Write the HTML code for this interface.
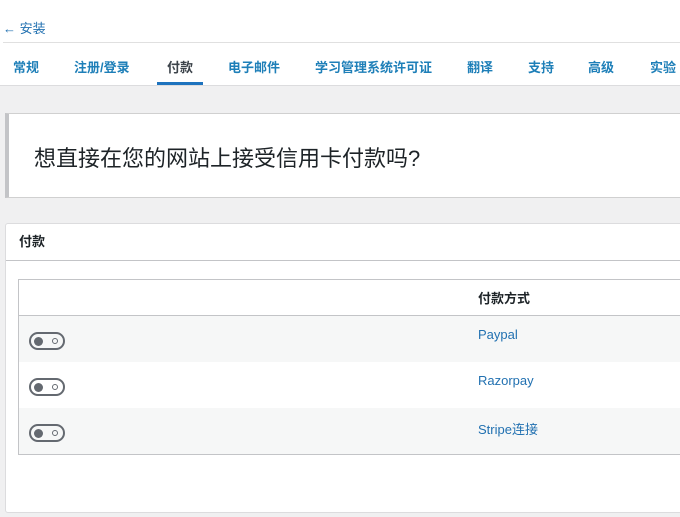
<!DOCTYPE html>
<html><head><meta charset="utf-8"><style>
*{margin:0;padding:0;box-sizing:border-box}
body{width:680px;height:517px;overflow:hidden;background:#f0f0f1;font-family:"Liberation Sans","Noto Sans CJK SC",sans-serif;position:relative}
.top{position:absolute;left:0;top:0;width:680px;height:86px;background:#fff;border-bottom:1px solid #dcdcde}
.back{position:absolute;left:3px;top:18px;font-size:13px;color:#2271b1}
.line{position:absolute;left:3px;top:42px;right:0;height:1px;background:#e0e0e0}
.tab{position:absolute;top:57px;font-size:13px;font-weight:bold;color:#1e7fb8}
.tab.act{color:#3c434a}
.ul{position:absolute;left:157px;top:82px;width:46px;height:3px;background:#1e73be}
.notice{position:absolute;left:5px;top:113px;width:700px;height:85px;background:#fff;border:1px solid #d0d0d0;border-left:4px solid #c3c4c7}
.notice div{position:absolute;left:25px;top:27px;font-size:22px;color:#1d2327}
.card{position:absolute;left:5px;top:223px;width:700px;height:290px;background:#fff;border:1px solid #dcdcde;border-radius:3px}
.ch{position:absolute;left:13px;top:7px;font-size:13px;font-weight:bold;color:#1d2327}
.chl{position:absolute;left:0;right:0;top:36px;height:1px;background:#c3c4c7}
.tbl{position:absolute;left:18px;top:279px;width:700px;height:176px;border:1px solid #c3c4c7;background:#fff}
.row{position:absolute;left:0;right:0;height:46px}
.hd{top:0;height:36px;border-bottom:1px solid #c3c4c7}
.hd span{position:absolute;left:459px;top:8px;font-size:13px;font-weight:bold;color:#1d2327}
.row a{position:absolute;left:459px;top:11px;font-size:13px;color:#2271b1;text-decoration:none}
.tg{position:absolute;left:10px;top:16px;width:36px;height:18px;border:2px solid #646970;border-radius:9px}
.tg:before{content:"";position:absolute;left:3px;top:3px;width:9px;height:9px;border-radius:50%;background:#646970}
.tg:after{content:"";position:absolute;right:5px;top:4px;width:4px;height:4px;border-radius:50%;border:1.5px solid #646970}
</style></head><body>
<div class="top">
<div class="back">← 安装</div>
<div class="line"></div>
<div class="tab" style="left:13px">常规</div>
<div class="tab" style="left:74px">注册/登录</div>
<div class="tab act" style="left:167px">付款</div>
<div class="tab" style="left:228px">电子邮件</div>
<div class="tab" style="left:315px">学习管理系统许可证</div>
<div class="tab" style="left:467px">翻译</div>
<div class="tab" style="left:528px">支持</div>
<div class="tab" style="left:588px">高级</div>
<div class="tab" style="left:650px">实验</div>
<div class="ul"></div>
</div>
<div class="notice"><div>想直接在您的网站上接受信用卡付款吗?</div></div>
<div class="card"><div class="ch">付款</div><div class="chl"></div></div>
<div class="tbl">
<div class="row hd"><span>付款方式</span></div>
<div class="row" style="top:36px;background:#f6f7f7"><div class="tg"></div><a>Paypal</a></div>
<div class="row" style="top:82px"><div class="tg"></div><a>Razorpay</a></div>
<div class="row" style="top:128px;background:#f6f7f7"><div class="tg"></div><a>Stripe连接</a></div>
</div>
</body></html>
